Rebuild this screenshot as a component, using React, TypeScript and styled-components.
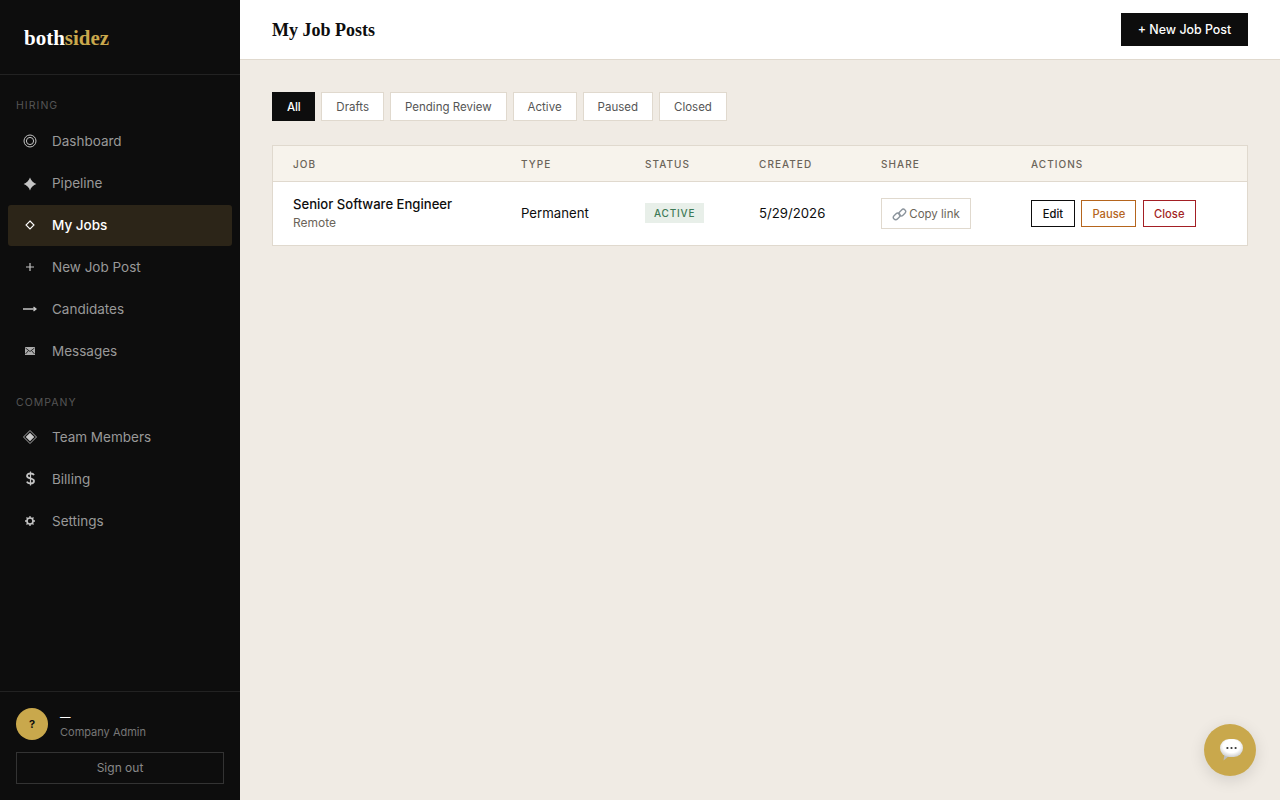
import styled, { createGlobalStyle } from "styled-components";

const sans = `"Inter", "Open Sans", "Liberation Sans", sans-serif`;
const serif = `"Liberation Serif", "DejaVu Serif", serif`;

const GlobalStyle = createGlobalStyle`
  html, body {
    margin: 0;
    padding: 0;
    height: 100%;
    background: #f0ebe4;
    font-family: ${sans};
  }
  * {
    box-sizing: border-box;
  }
`;

const Layout = styled.div`
  display: flex;
  height: 800px;
  overflow: hidden;
`;

const Sidebar = styled.aside`
  width: 240px;
  flex-shrink: 0;
  display: flex;
  flex-direction: column;
  background: #0d0d0d;
`;

const Brand = styled.div`
  height: 75px;
  padding: 2px 24px 0;
  display: flex;
  align-items: center;
  border-bottom: 1px solid #222;
  font-family: ${serif};
  font-size: 21px;
  font-weight: 700;
  color: #fff;
  span {
    color: #c9a84c;
  }
`;

const Nav = styled.nav`
  flex: 1;
  padding: 0 8px;
`;

const SectionLabel = styled.div<{ $top: number; $bottom: number }>`
  margin-top: ${(p) => p.$top}px;
  margin-bottom: ${(p) => p.$bottom}px;
  padding-left: 8px;
  height: 14px;
  line-height: 14px;
  font-size: 10.5px;
  letter-spacing: 1.05px;
  color: #555;
`;

const NavItem = styled.a<{ $active?: boolean }>`
  height: 41px;
  margin-bottom: 1px;
  padding: 0 0 2px 14px;
  display: flex;
  align-items: center;
  gap: 14px;
  border-radius: 3px;
  font-size: 13.5px;
  font-weight: ${(p) => (p.$active ? 500 : 400)};
  color: ${(p) => (p.$active ? "#fff" : "#999")};
  background: ${(p) => (p.$active ? "#2c2518" : "transparent")};
`;

const NavIcon = styled.span`
  width: 16px;
  height: 16px;
  display: flex;
  align-items: center;
  justify-content: center;
  flex-shrink: 0;
  color: #c4c4c4;
`;

const SidebarFooter = styled.div`
  border-top: 1px solid #222;
  padding: 16px;
`;

const UserRow = styled.div`
  display: flex;
  align-items: center;
  gap: 12px;
  margin-bottom: 12px;
`;

const Avatar = styled.div`
  width: 32px;
  height: 32px;
  border-radius: 50%;
  background: #c9a84c;
  color: #0d0d0d;
  display: flex;
  align-items: center;
  justify-content: center;
  font-size: 11px;
  font-weight: 700;
`;

const UserName = styled.div`
  height: 17px;
  padding-top: 2px;
  font-size: 10.5px;
  line-height: 16px;
  font-weight: 600;
  color: #fff;
`;

const UserRole = styled.div`
  font-size: 11px;
  line-height: 15px;
  color: #777;
`;

const SignOut = styled.button`
  width: 100%;
  height: 32px;
  padding: 0 0 2px;
  background: transparent;
  border: 1px solid #333;
  color: #888;
  font-family: inherit;
  font-size: 12px;
`;

const Main = styled.main`
  flex: 1;
  min-width: 0;
  display: flex;
  flex-direction: column;
`;

const TopBar = styled.header`
  height: 60px;
  padding: 0 32px;
  display: flex;
  align-items: center;
  justify-content: space-between;
  background: #fff;
  border-bottom: 1px solid #e0d9ce;
`;

const PageTitle = styled.h1`
  margin: 2px 0 0;
  font-family: ${serif};
  font-size: 18px;
  font-weight: 700;
  color: #0d0d0d;
`;

const PrimaryButton = styled.button`
  width: 127px;
  height: 33px;
  padding: 0;
  border: none;
  background: #0d0d0d;
  color: #fff;
  font-family: inherit;
  font-size: 12.4px;
  font-weight: 500;
`;

const Content = styled.div`
  padding: 32px;
`;

const Tabs = styled.div`
  display: flex;
  gap: 6px;
  margin-bottom: 24px;
`;

const Tab = styled.button<{ $active?: boolean }>`
  height: 29px;
  padding: 0 14px;
  border: 1px solid ${(p) => (p.$active ? "#0d0d0d" : "#e0d9ce")};
  background: ${(p) => (p.$active ? "#0d0d0d" : "#fff")};
  color: ${(p) => (p.$active ? "#fff" : "#555")};
  font-family: inherit;
  font-size: 11.5px;
  font-weight: ${(p) => (p.$active ? 500 : 400)};
  letter-spacing: ${(p) => (p.$active ? "-0.2px" : "0")};
`;

const Table = styled.table`
  width: 976px;
  border-collapse: separate;
  border-spacing: 0;
  table-layout: fixed;
  background: #fff;
  border: 1px solid #e0d9ce;
`;

const HeadRow = styled.tr`
  height: 36px;
  background: #f7f3ec;
`;

const Th = styled.th<{ $w: number }>`
  width: ${(p) => p.$w}px;
  padding: 1px 0 0 20px;
  text-align: left;
  border-bottom: 1px solid #e0d9ce;
  font-size: 10px;
  font-weight: 500;
  letter-spacing: 1.05px;
  color: #6b6459;
`;

const BodyRow = styled.tr`
  height: 63px;
`;

const Td = styled.td`
  padding: 0 0 0 20px;
  font-size: 13.2px;
  color: #0d0d0d;
`;

const TextCell = styled(Td)`
  padding-bottom: 2px;
`;

const JobTitle = styled.div`
  font-size: 13.1px;
  line-height: 18px;
  font-weight: 500;
`;

const JobMeta = styled.div`
  margin-top: 2px;
  font-size: 12px;
  line-height: 16px;
  color: #6b6459;
`;

const Badge = styled.span`
  display: inline-block;
  height: 20px;
  padding: 0 9px;
  line-height: 20px;
  background: #e8efe9;
  color: #3d7a57;
  font-size: 10px;
  font-weight: 500;
  letter-spacing: 0.8px;
`;

const CopyButton = styled.button`
  height: 31px;
  width: 90px;
  padding: 1px 0 0;
  display: flex;
  align-items: center;
  justify-content: center;
  gap: 2px;
  background: #fff;
  border: 1px solid #e0d9ce;
  color: #6b6459;
  font-family: inherit;
  font-size: 11.5px;
`;

const Actions = styled.div`
  display: flex;
  gap: 6.4px;
`;

const ActionButton = styled.button<{ $color: string; $w: number }>`
  width: ${(p) => p.$w}px;
  height: 27px;
  padding: 0;
  background: #fff;
  border: 1px solid ${(p) => p.$color};
  color: ${(p) => p.$color};
  font-family: inherit;
  font-size: 11.2px;
  font-weight: 500;
`;

const ChatBubble = styled.button`
  position: fixed;
  right: 24px;
  bottom: 24px;
  width: 52px;
  height: 52px;
  padding: 0;
  border: none;
  border-radius: 50%;
  background: #c9a84c;
  box-shadow: 0 4px 16px rgba(0, 0, 0, 0.12);
  display: flex;
  align-items: center;
  justify-content: center;
`;

const icons = {
  dashboard: (
    <svg width="14" height="14" viewBox="0 0 14 14" fill="none" stroke="currentColor">
      <circle cx="7" cy="7" r="6" />
      <circle cx="7" cy="7" r="3.6" />
    </svg>
  ),
  pipeline: (
    <svg width="14" height="16" viewBox="0 -2 14 16" fill="currentColor">
      <path d="M7 0.6 C7.8 3.4 10.6 6.2 13.4 7 C10.6 7.8 7.8 10.6 7 13.4 C6.2 10.6 3.4 7.8 0.6 7 C3.4 6.2 6.2 3.4 7 0.6Z" />
    </svg>
  ),
  jobs: (
    <svg width="10" height="10" viewBox="0 0 10 10" fill="none" stroke="#fff" strokeWidth="1.1">
      <path d="M5 1 L9 5 L5 9 L1 5Z" />
    </svg>
  ),
  plus: (
    <svg width="8" height="8" viewBox="0 0 8 8" stroke="currentColor" strokeWidth="1.2">
      <path d="M4 0V8M0 4H8" />
    </svg>
  ),
  arrow: (
    <svg width="14" height="8" viewBox="0 0 14 8" fill="none" stroke="currentColor" strokeWidth="1.3">
      <path d="M0 4H13M10.5 2L13 4L10.5 6" />
    </svg>
  ),
  mail: (
    <svg width="10" height="8" viewBox="0 0 10 8">
      <rect width="10" height="8" fill="#aaa" />
      <path d="M0.5 1 L5 4.5 L9.5 1 M0.5 7 L3.5 3.5 M9.5 7 L6.5 3.5" fill="none" stroke="#0d0d0d" strokeWidth="0.8" />
    </svg>
  ),
  team: (
    <svg width="14" height="14" viewBox="0 0 14 14">
      <path d="M7 0.5 L13.5 7 L7 13.5 L0.5 7Z" fill="none" stroke="#aaa" strokeWidth="1" />
      <path d="M7 2.7 L11.3 7 L7 11.3 L2.7 7Z" fill="#c9c9c9" />
    </svg>
  ),
  dollar: (
    <svg width="9" height="15" viewBox="0 0 9 15" fill="none" stroke="currentColor" strokeWidth="1.8">
      <path d="M8 4.1 C7.4 2.9 6 2.5 4.5 2.5 C2.6 2.5 1 3.3 1 5 C1 8.1 8 6.7 8 10 C8 11.7 6.4 12.5 4.5 12.5 C2.8 12.5 1.4 11.9 0.8 10.7" />
      <path d="M4.5 0.5V14.5" strokeWidth="1.2" />
    </svg>
  ),
  gear: (
    <svg width="10" height="10" viewBox="0 0 10 10">
      <circle cx="5" cy="5" r="3" fill="none" stroke="currentColor" strokeWidth="1.6" />
      <path d="M5 0V2M5 8V10M0 5H2M8 5H10M1.5 1.5L3 3M7 7L8.5 8.5M8.5 1.5L7 3M3 7L1.5 8.5" stroke="currentColor" strokeWidth="1.3" />
    </svg>
  ),
};

const hiringItems = [
  { label: "Dashboard", icon: icons.dashboard },
  { label: "Pipeline", icon: icons.pipeline },
  { label: "My Jobs", icon: icons.jobs, active: true },
  { label: "New Job Post", icon: icons.plus },
  { label: "Candidates", icon: icons.arrow },
  { label: "Messages", icon: icons.mail },
];

const companyItems = [
  { label: "Team Members", icon: icons.team },
  { label: "Billing", icon: icons.dollar },
  { label: "Settings", icon: icons.gear },
];

const tabs = ["All", "Drafts", "Pending Review", "Active", "Paused", "Closed"];

export default function App() {
  return (
    <>
      <GlobalStyle />
      <Layout>
        <Sidebar>
          <Brand>
            both<span>sidez</span>
          </Brand>
          <Nav>
            <SectionLabel $top={24} $bottom={8}>HIRING</SectionLabel>
            {hiringItems.map((item) => (
              <NavItem key={item.label} $active={item.active}>
                <NavIcon>{item.icon}</NavIcon>
                {item.label}
              </NavItem>
            ))}
            <SectionLabel $top={24} $bottom={7}>COMPANY</SectionLabel>
            {companyItems.map((item) => (
              <NavItem key={item.label}>
                <NavIcon>{item.icon}</NavIcon>
                {item.label}
              </NavItem>
            ))}
          </Nav>
          <SidebarFooter>
            <UserRow>
              <Avatar>?</Avatar>
              <div>
                <UserName>—</UserName>
                <UserRole>Company Admin</UserRole>
              </div>
            </UserRow>
            <SignOut>Sign out</SignOut>
          </SidebarFooter>
        </Sidebar>
        <Main>
          <TopBar>
            <PageTitle>My Job Posts</PageTitle>
            <PrimaryButton>+ New Job Post</PrimaryButton>
          </TopBar>
          <Content>
            <Tabs>
              {tabs.map((t, i) => (
                <Tab key={t} $active={i === 0}>
                  {t}
                </Tab>
              ))}
            </Tabs>
            <Table>
              <thead>
                <HeadRow>
                  <Th $w={228}>JOB</Th>
                  <Th $w={124}>TYPE</Th>
                  <Th $w={114}>STATUS</Th>
                  <Th $w={122}>CREATED</Th>
                  <Th $w={150}>SHARE</Th>
                  <Th $w={236}>ACTIONS</Th>
                </HeadRow>
              </thead>
              <tbody>
                <BodyRow>
                  <TextCell>
                    <JobTitle>Senior Software Engineer</JobTitle>
                    <JobMeta>Remote</JobMeta>
                  </TextCell>
                  <TextCell>Permanent</TextCell>
                  <TextCell>
                    <Badge>ACTIVE</Badge>
                  </TextCell>
                  <TextCell>5/29/2026</TextCell>
                  <Td>
                    <CopyButton>
                      <svg width="15" height="15" viewBox="0 0 14 14" fill="none" stroke="#8b949c" strokeWidth="1.3">
                        <rect x="0.9" y="6.6" width="7" height="4.4" rx="2.2" transform="rotate(-45 4.4 8.8)" />
                        <rect x="6.1" y="3" width="7" height="4.4" rx="2.2" transform="rotate(-45 9.6 5.2)" />
                      </svg>
                      Copy link
                    </CopyButton>
                  </Td>
                  <Td>
                    <Actions>
                      <ActionButton $color="#0d0d0d" $w={44}>Edit</ActionButton>
                      <ActionButton $color="#b5651d" $w={55}>Pause</ActionButton>
                      <ActionButton $color="#a31f24" $w={53}>Close</ActionButton>
                    </Actions>
                  </Td>
                </BodyRow>
              </tbody>
            </Table>
          </Content>
        </Main>
      </Layout>
      <ChatBubble aria-label="Chat">
        <svg width="26" height="26" viewBox="0 0 26 26">
          <defs>
            <radialGradient id="puff" cx="50%" cy="40%" r="60%">
              <stop offset="60%" stopColor="#ffffff" />
              <stop offset="100%" stopColor="#cfcfcf" />
            </radialGradient>
          </defs>
          <path d="M6.5 23.5 L7.5 17 L12 19 Z" fill="#bdbdbd" />
          <rect x="3" y="2" width="23" height="18" rx="9" fill="url(#puff)" />
          <circle cx="10.4" cy="11" r="1.1" fill="#333" />
          <circle cx="14.5" cy="11" r="1.1" fill="#333" />
          <circle cx="18.6" cy="11" r="1.1" fill="#333" />
        </svg>
      </ChatBubble>
    </>
  );
}
